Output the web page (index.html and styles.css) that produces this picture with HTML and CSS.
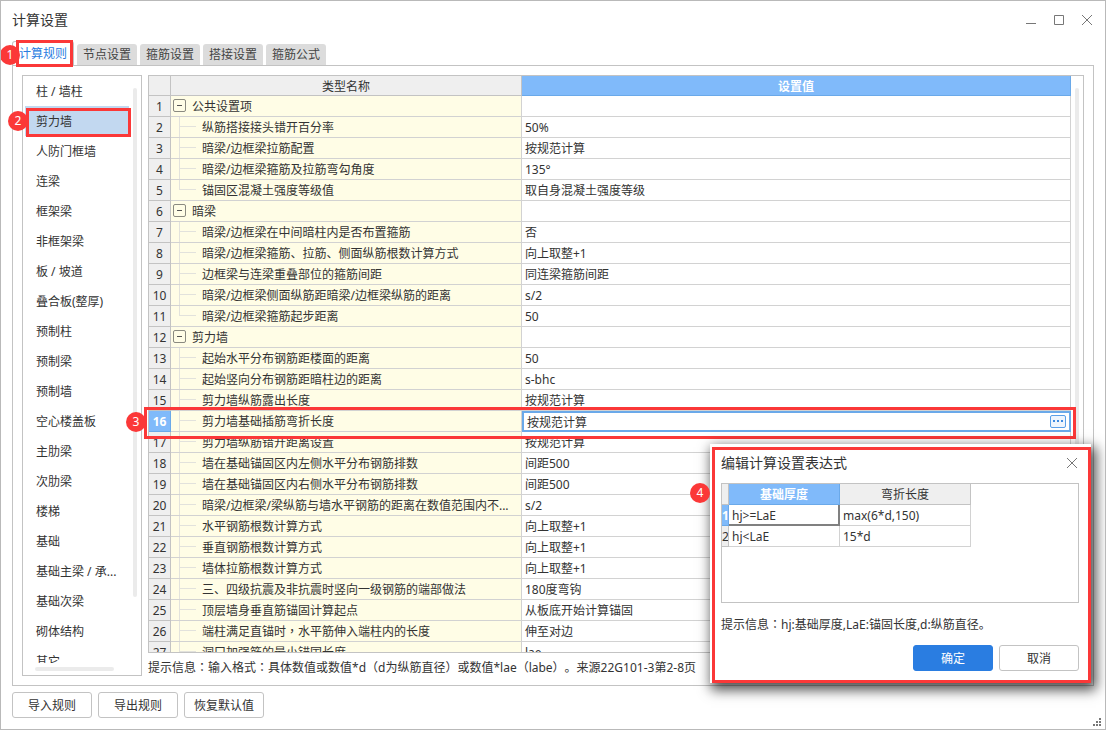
FILE: index.html
```
<!DOCTYPE html>
<html lang="zh-CN">
<head>
<meta charset="utf-8">
<title>计算设置</title>
<link rel="stylesheet" href="styles.css">
</head>
<body>
<div class="window">
  <header class="titlebar">
    <h1 class="title">计算设置</h1>
    <div class="window-controls">
      <button class="icon-button" aria-label="最小化"><svg width="12" height="12" viewBox="0 0 12 12"><path d="M1 9.500h10"/></svg></button>
      <button class="icon-button" aria-label="最大化"><svg width="12" height="12" viewBox="0 0 12 12"><path d="M1.500 1.500h9v9h-9z"/></svg></button>
      <button class="icon-button" aria-label="关闭"><svg width="12" height="12" viewBox="0 0 12 12"><path d="M1 1l10 10M11 1L1 11"/></svg></button>
    </div>
  </header>

  <nav class="tabs">
    <button class="tab tab-active">计算规则</button>
    <button class="tab">节点设置</button>
    <button class="tab">箍筋设置</button>
    <button class="tab">搭接设置</button>
    <button class="tab">箍筋公式</button>
  </nav>

  <main class="panel">
    <aside class="sidebar">
      <ul class="category-list">
        <li class="category">柱 / 墙柱</li>
        <li class="category category-selected">剪力墙</li>
        <li class="category">人防门框墙</li>
        <li class="category">连梁</li>
        <li class="category">框架梁</li>
        <li class="category">非框架梁</li>
        <li class="category">板 / 坡道</li>
        <li class="category">叠合板(整厚)</li>
        <li class="category">预制柱</li>
        <li class="category">预制梁</li>
        <li class="category">预制墙</li>
        <li class="category">空心楼盖板</li>
        <li class="category">主肋梁</li>
        <li class="category">次肋梁</li>
        <li class="category">楼梯</li>
        <li class="category">基础</li>
        <li class="category">基础主梁 / 承...</li>
        <li class="category">基础次梁</li>
        <li class="category">砌体结构</li>
        <li class="category">其它</li>
      </ul>
      <div class="scroll-vertical"></div>
      <div class="scroll-horizontal"></div>
    </aside>

    <section class="content">
      <div class="grid-frame">
        <table class="grid">
          <colgroup><col class="col-number"><col class="col-name"><col></colgroup>
          <thead>
            <tr><th></th><th>类型名称</th><th class="head-selected">设置值</th></tr>
          </thead>
          <tbody>
            <tr class="group"><th>1</th><td><button class="toggle" aria-label="折叠"></button>公共设置项</td><td></td></tr>
            <tr class="item"><th>2</th><td>纵筋搭接接头错开百分率</td><td>50%</td></tr>
            <tr class="item"><th>3</th><td>暗梁/边框梁拉筋配置</td><td>按规范计算</td></tr>
            <tr class="item"><th>4</th><td>暗梁/边框梁箍筋及拉筋弯勾角度</td><td>135°</td></tr>
            <tr class="item item-last"><th>5</th><td>锚固区混凝土强度等级值</td><td>取自身混凝土强度等级</td></tr>
            <tr class="group"><th>6</th><td><button class="toggle" aria-label="折叠"></button>暗梁</td><td></td></tr>
            <tr class="item"><th>7</th><td>暗梁/边框梁在中间暗柱内是否布置箍筋</td><td>否</td></tr>
            <tr class="item"><th>8</th><td>暗梁/边框梁箍筋、拉筋、侧面纵筋根数计算方式</td><td>向上取整+1</td></tr>
            <tr class="item"><th>9</th><td>边框梁与连梁重叠部位的箍筋间距</td><td>同连梁箍筋间距</td></tr>
            <tr class="item"><th>10</th><td>暗梁/边框梁侧面纵筋距暗梁/边框梁纵筋的距离</td><td>s/2</td></tr>
            <tr class="item item-last"><th>11</th><td>暗梁/边框梁箍筋起步距离</td><td>50</td></tr>
            <tr class="group"><th>12</th><td><button class="toggle" aria-label="折叠"></button>剪力墙</td><td></td></tr>
            <tr class="item"><th>13</th><td>起始水平分布钢筋距楼面的距离</td><td>50</td></tr>
            <tr class="item"><th>14</th><td>起始竖向分布钢筋距暗柱边的距离</td><td>s-bhc</td></tr>
            <tr class="item"><th>15</th><td>剪力墙纵筋露出长度</td><td>按规范计算</td></tr>
            <tr class="item"><th class="number-selected">16</th><td>剪力墙基础插筋弯折长度</td><td class="editing"><div class="editor"><input class="editor-input" aria-label="剪力墙基础插筋弯折长度" value="按规范计算"><button class="more" aria-label="编辑表达式"><svg width="16" height="13" viewBox="0 0 16 13"><path d="M3 5h2v2H3zM7 5h2v2H7zM11 5h2v2h-2z"/></svg></button></div></td></tr>
            <tr class="item"><th>17</th><td>剪力墙纵筋错开距离设置</td><td>按规范计算</td></tr>
            <tr class="item"><th>18</th><td>墙在基础锚固区内左侧水平分布钢筋排数</td><td>间距500</td></tr>
            <tr class="item"><th>19</th><td>墙在基础锚固区内右侧水平分布钢筋排数</td><td>间距500</td></tr>
            <tr class="item"><th>20</th><td>暗梁/边框梁/梁纵筋与墙水平钢筋的距离在数值范围内不...</td><td>s/2</td></tr>
            <tr class="item"><th>21</th><td>水平钢筋根数计算方式</td><td>向上取整+1</td></tr>
            <tr class="item"><th>22</th><td>垂直钢筋根数计算方式</td><td>向上取整+1</td></tr>
            <tr class="item"><th>23</th><td>墙体拉筋根数计算方式</td><td>向上取整+1</td></tr>
            <tr class="item"><th>24</th><td>三、四级抗震及非抗震时竖向一级钢筋的端部做法</td><td>180度弯钩</td></tr>
            <tr class="item"><th>25</th><td>顶层墙身垂直筋锚固计算起点</td><td>从板底开始计算锚固</td></tr>
            <tr class="item"><th>26</th><td>端柱满足直锚时<span class="centered-mark" lang="zh-TW">，</span>水平筋伸入端柱内的长度</td><td>伸至对边</td></tr>
            <tr class="item"><th>27</th><td>洞口加强筋的最小锚固长度</td><td>lae</td></tr>
          </tbody>
        </table>
        <div class="grid-scroll"></div>
      </div>
      <p class="hint">提示信息<span class="centered-mark" lang="zh-TW">：</span>输入格式<span class="centered-mark" lang="zh-TW">：</span>具体数值或数值*d（d为纵筋直径）或数值*lae（labe）。来源22G101-3第2-8页</p>
    </section>
  </main>

  <footer class="actions">
    <button class="button">导入规则</button>
    <button class="button">导出规则</button>
    <button class="button">恢复默认值</button>
  </footer>
  <svg class="grip" width="9" height="9" viewBox="0 0 9 9"><path d="M6 0h2v2H6zM3 3h2v2H3zM6 3h2v2H6zM0 6h2v2H0zM3 6h2v2H3zM6 6h2v2H6z"/></svg>

  <div class="mark mark-tab"></div>
  <div class="mark mark-category"></div>
  <div class="mark mark-row"></div>
  <span class="badge badge-tab">1</span>
  <span class="badge badge-category">2</span>
  <span class="badge badge-row">3</span>

  <div class="dialog" role="dialog" aria-labelledby="dialog-title">
    <div class="dialog-body">
      <div class="dialog-head">
        <h2 class="title" id="dialog-title">编辑计算设置表达式</h2>
        <button class="icon-button" aria-label="关闭"><svg width="12" height="12" viewBox="0 0 12 12"><path d="M1 1l10 10M11 1L1 11"/></svg></button>
      </div>
      <div class="expression-frame">
        <table class="grid expression">
          <colgroup><col class="col-index"><col class="col-thickness"><col class="col-length"></colgroup>
          <thead><tr><th></th><th class="head-selected">基础厚度</th><th>弯折长度</th></tr></thead>
          <tbody>
            <tr><th class="number-selected">1</th><td class="cell-focus">hj&gt;=LaE</td><td>max(6*d,150)</td></tr>
            <tr><th>2</th><td>hj&lt;LaE</td><td>15*d</td></tr>
          </tbody>
        </table>
      </div>
      <p class="dialog-hint">提示信息<span class="centered-mark" lang="zh-TW">：</span>hj:基础厚度,LaE:锚固长度,d:纵筋直径。</p>
      <div class="dialog-actions">
        <button class="button button-primary">确定</button>
        <button class="button">取消</button>
      </div>
    </div>
  </div>
  <span class="badge badge-dialog">4</span>
</div>
</body>
</html>
```
FILE: styles.css
```
* { box-sizing: border-box; }

body, h1, h2, p, ul { margin: 0; padding: 0; }

body, button, input {
  font-family: "Noto Sans", "Noto Sans CJK SC", sans-serif;
  font-size: 12px;
  color: #333;
  text-spacing-trim: space-all;
}

button { padding: 0; border: 0; background: none; }

.centered-mark { font-family: "Noto Sans CJK TC", sans-serif; line-height: 1; }

.window {
  position: relative;
  display: flex;
  flex-direction: column;
  height: 100vh;
  padding: 0 11px 11px;
  overflow: hidden;
  border: 1px solid #b9b9b9;
  background: #fff;
}

.titlebar {
  display: flex;
  align-items: center;
  justify-content: space-between;
  height: 38px;
  flex: none;
  padding-right: 1px;
}

.title { font-size: 14px; font-weight: 400; line-height: 20px; }

.window-controls { display: flex; gap: 16px; }

.icon-button { display: flex; width: 12px; height: 12px; }
.icon-button path { fill: none; stroke: #777; }

.tabs {
  display: flex;
  flex: none;
  align-items: flex-end;
  gap: 3px;
  height: 26px;
}

.tab {
  height: 21px;
  padding: 0 6px;
  border-radius: 3px 3px 0 0;
  background: #dcdcdc;
  line-height: 21px;
  color: #444;
}

.tab-active {
  height: 24px;
  border: 1px solid #c3c3c3;
  border-bottom: 0;
  background: #fff;
  color: #2a7de1;
}

.panel {
  display: flex;
  flex: 1;
  gap: 6px;
  min-height: 0;
  padding: 9px;
  border: 1px solid #c3c3c3;
}

.sidebar {
  position: relative;
  flex: none;
  width: 120px;
  padding-bottom: 12px;
  border: 1px solid #c3c3c3;
}

.category-list { height: 100%; overflow: hidden; list-style: none; }
.category { height: 30px; padding-left: 13px; line-height: 32px; white-space: nowrap; }
.category-selected { margin: 0 12px 0 2px; padding-left: 11px; background: #c2d8f0; }

.scroll-vertical, .scroll-horizontal, .grid-scroll {
  position: absolute;
  border-radius: 2px;
  background: #ebebeb;
}
.scroll-vertical { top: 12px; right: 4px; bottom: 78px; width: 4px; }
.scroll-horizontal { left: 12px; right: 27px; bottom: 4px; height: 4px; }
.grid-scroll { top: 12px; right: 4px; bottom: 60px; width: 4px; }

.content { display: flex; flex: 1; flex-direction: column; min-width: 0; }

.grid-frame {
  position: relative;
  flex: 1;
  min-height: 0;
  padding-right: 12px;
  overflow: hidden;
  border: 1px solid #c3c3c3;
}

.grid { width: 100%; table-layout: fixed; border-spacing: 0; }
.grid th, .grid td {
  height: 21px;
  padding: 2px 3px 0;
  overflow: hidden;
  border: 0 solid #d2d2d2;
  border-width: 0 1px 1px 0;
  line-height: 18px;
  text-align: left;
  white-space: nowrap;
}
.grid th { padding: 2px 0 0; border-color: #c3c3c3; background: #efefef; font-weight: 400; text-align: center; }
.grid thead th { height: 20px; line-height: 17px; }
.grid thead .head-selected { border-color: #6aa9e9; background: #80bafa; color: #fff; font-weight: 700; }
.grid .number-selected { border-color: #6aa9e9; background: #80bafa; color: #fff; font-weight: 700; }

.col-number { width: 22px; }
.col-name { width: 351px; }

.group td:nth-child(2), .item td:nth-child(2) { background-color: #fffde6; }
.grid .group td:nth-child(2) { padding-left: 2px; }

.toggle {
  width: 13px;
  height: 13px;
  margin-right: 6px;
  border: 1px solid #8a8a80;
  border-radius: 2px;
  background: linear-gradient(#555, #555) center / 5px 1px no-repeat;
  vertical-align: 0;
}

/* Tree branch: a trunk down the row and a twig towards the label. */
.grid .item td:nth-child(2) {
  padding-left: 31px;
  background-image: linear-gradient(#e2e2dc, #e2e2dc), linear-gradient(#e2e2dc, #e2e2dc);
  background-position: 8px 0, 8px 9px;
  background-repeat: no-repeat;
  background-size: 1px 100%, 17px 1px;
}
.grid .item-last td:nth-child(2) { background-size: 1px 9px, 17px 1px; }

.grid .editing { padding: 0; border: 0; }
.editor {
  display: flex;
  align-items: center;
  height: 21px;
  padding: 0 3px;
  border: 2px solid #6aa9e9;
}
.editor-input { flex: 1; min-width: 0; height: 17px; padding: 0; border: 0; outline: 0; background: none; }
.more { display: flex; width: 16px; height: 13px; border: 1px solid #5a9fe8; border-radius: 2px; background: #eef5fd; }
.more svg { flex: none; margin: -1px; }
.more path { fill: #3d8ae0; }

.hint { height: 23px; flex: none; padding-top: 5px; line-height: 20px; white-space: nowrap; }

.actions { display: flex; flex: none; gap: 6px; margin-top: 6px; }

.button {
  width: 80px;
  height: 26px;
  padding-top: 1px;
  border: 1px solid #c3c3c3;
  border-radius: 3px;
  background: #fff;
  line-height: 23px;
}
.button-primary { border-color: #2a7de1; background: #2a7de1; color: #fff; }

.grip { position: absolute; right: 3px; bottom: 2px; }
.grip path { fill: #777; }

.mark { position: absolute; border: 3px solid #fb3838; pointer-events: none; }
.mark-tab { top: 39px; left: 15px; width: 57px; height: 27px; }
.mark-category { top: 107px; left: 25px; width: 105px; height: 29px; }
.mark-row { top: 406px; left: 143px; right: 29px; height: 32px; }

.badge {
  position: absolute;
  width: 20px;
  height: 20px;
  border-radius: 50%;
  background: #fb3838;
  color: #fff;
  line-height: 20px;
  text-align: center;
}
.badge-tab { top: 44px; left: -1px; }
.badge-category { top: 110px; left: 7px; }
.badge-row { top: 411px; left: 125px; }
.badge-dialog { right: 395px; bottom: 226px; }

.dialog {
  position: absolute;
  right: 14px;
  bottom: 46px;
  width: 381px;
  padding: 3px 0 0 2px;
  background: #fff;
  box-shadow: 3px 5px 12px 2px rgba(0, 0, 0, 0.7);
}
.dialog-body { padding: 0 9px 9px 6px; border: 3px solid #fb3838; }
.dialog-head { display: flex; align-items: center; justify-content: space-between; height: 26px; padding-right: 1px; }
.expression-frame { height: 120px; margin-top: 7px; border: 1px solid #c3c3c3; }
.expression { width: 249px; }
.expression thead th { height: 21px; line-height: 18px; }
.col-index { width: 7px; }
.col-thickness { width: 111px; }
.col-length { width: 131px; }
.grid .cell-focus { border-color: #808080; box-shadow: inset -1px -1px #808080; }
.dialog-hint { margin-top: 12px; line-height: 20px; }
.dialog-actions { display: flex; justify-content: flex-end; gap: 6px; margin-top: 10px; }
```
